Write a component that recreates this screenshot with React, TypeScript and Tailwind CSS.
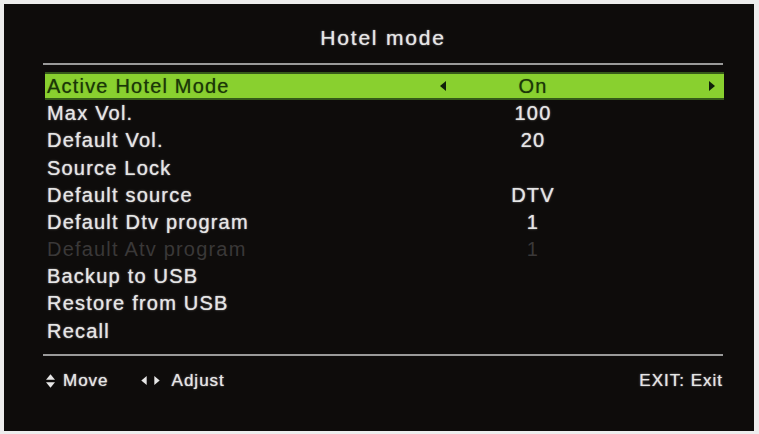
import React from 'react';

type Row = { label: string; value?: string; disabled?: boolean };

const rows: Row[] = [
  { label: 'Active Hotel Mode', value: 'On' },
  { label: 'Max Vol.', value: '100' },
  { label: 'Default Vol.', value: '20' },
  { label: 'Source Lock' },
  { label: 'Default source', value: 'DTV' },
  { label: 'Default Dtv program', value: '1' },
  { label: 'Default Atv program', value: '1', disabled: true },
  { label: 'Backup to USB' },
  { label: 'Restore from USB' },
  { label: 'Recall' },
];

function Tri({ dir, className }: { dir: 'left' | 'right' | 'up' | 'down'; className?: string }) {
  const pts = {
    left: '6,0 6,10 0,5',
    right: '0,0 0,10 6,5',
    up: '0,6 10,6 5,0',
    down: '0,0 10,0 5,6',
  }[dir];
  const vb = dir === 'left' || dir === 'right' ? '0 0 6 10' : '0 0 10 6';
  return (
    <svg viewBox={vb} className={className} fill="currentColor">
      <polygon points={pts} />
    </svg>
  );
}

export default function App() {
  return (
    <div
      className="w-[759px] h-[434px] bg-[#ededed] pt-[4px] pl-[4px] pr-[5px] pb-[3px]"
      style={{ fontFamily: '"Liberation Sans", Arial, sans-serif' }}
    >
      <div className="h-full bg-[#0e0c0b] pl-[39px] flex flex-col text-[#e6e6e6] [text-shadow:0_0_1px_rgba(255,255,255,0.7),0_0_3px_rgba(255,255,255,0.25)]">
        <div className="w-[680px] h-[59px] pt-[9px] flex items-center justify-center text-[21px] tracking-[1.8px]">
          Hotel mode
        </div>
        <div className="w-[680px] h-[2px] bg-[#9a9a9a]" />
        <div className="mt-[7.4px] flex flex-col">
          {rows.map((r, i) => {
            const active = i === 0;
            return (
              <div
                key={r.label}
                className={
                  'ml-[2px] w-[679px] h-[27.2px] flex items-center pl-[2px] text-[20px] tracking-[1.2px] ' +
                  (active
                    ? 'bg-[#89d02f] text-[#1b3608] border-y-2 border-[#35591a] [text-shadow:0_0_1px_rgba(20,50,5,0.6)]'
                    : r.disabled
                    ? 'text-[#3a3838] [text-shadow:none]'
                    : '')
                }
              >
                <div className="w-[390px] whitespace-nowrap">{r.label}</div>
                <div className="w-[12px] flex justify-center">
                  {active && <Tri dir="left" className="w-[6px] h-[10px] text-[#10200a]" />}
                </div>
                <div className="w-[168px] text-center">{r.value}</div>
                <div className="flex-1" />
                <div className="w-[12px] flex justify-center">
                  {active && <Tri dir="right" className="w-[6px] h-[10px] text-[#10200a]" />}
                </div>
                <div className="w-[6px]" />
              </div>
            );
          })}
        </div>
        <div className="mt-[9.6px] w-[680px] h-[2px] bg-[#9a9a9a]" />
        <div className="w-[680px] h-[50px] flex items-center text-[17px] tracking-[1px]">
          <div className="ml-[2px] w-[10px] flex flex-col items-center gap-[2px]">
            <Tri dir="up" className="w-[9px] h-[6px]" />
            <Tri dir="down" className="w-[9px] h-[6px]" />
          </div>
          <span className="ml-[8px]">Move</span>
          <div className="ml-[32px] flex items-center gap-[7px]">
            <Tri dir="left" className="w-[6px] h-[9px]" />
            <Tri dir="right" className="w-[6px] h-[9px]" />
          </div>
          <span className="ml-[12px]">Adjust</span>
          <span className="ml-auto">EXIT: Exit</span>
        </div>
      </div>
    </div>
  );
}
